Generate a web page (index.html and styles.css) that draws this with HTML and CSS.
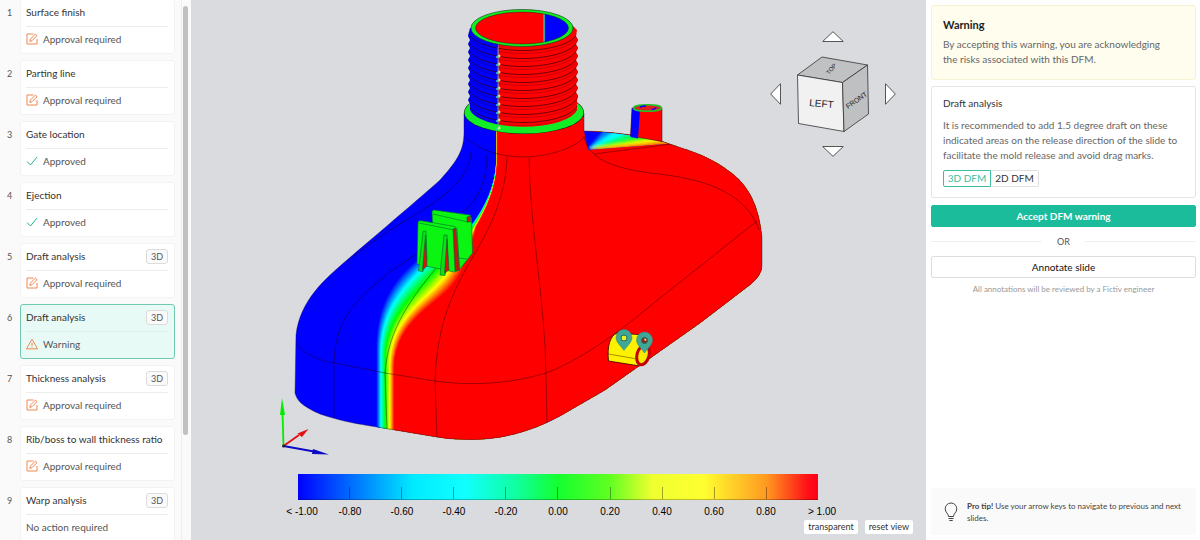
FILE: index.html
```html
<!DOCTYPE html>
<html lang="en">
<head>
    <meta charset="UTF-8">
    <meta name="viewport" content="width=device-width, initial-scale=1.0">
    <title>DFM review</title>
    <link rel="stylesheet" href="styles.css">
</head>
<body>

    <!-- icons shared by the slide list -->
    <svg class="sprite" aria-hidden="true">
        <symbol id="icon-edit" viewBox="0 0 12 12">
            <path d="M7.500 1H1v10h10V6"/>
            <path d="M3.800 8.400l.6-2.300L9.400 1.100l1.600 1.600L6 7.700z"/>
        </symbol>
        <symbol id="icon-check" viewBox="0 0 12 12">
            <path d="M1 6.500l3.500 3.500L11 2"/>
        </symbol>
        <symbol id="icon-warning" viewBox="0 0 12 12">
            <path d="M6 1.200L11.500 10.800H.5z M6 4.800v3 M6 8.700v.9"/>
        </symbol>
    </svg>

    <div class="app">
        <nav class="sidebar">
            <ol class="slides">
                <li class="slide">
                    <span class="number">1</span>
                    <div class="slide-card">
                        <div class="slide-title">Surface finish</div>
                        <div class="status"><svg class="icon orange"><use href="#icon-edit"/></svg>Approval required</div>
                    </div>
                </li>
                <li class="slide">
                    <span class="number">2</span>
                    <div class="slide-card">
                        <div class="slide-title">Parting line</div>
                        <div class="status"><svg class="icon orange"><use href="#icon-edit"/></svg>Approval required</div>
                    </div>
                </li>
                <li class="slide">
                    <span class="number">3</span>
                    <div class="slide-card">
                        <div class="slide-title">Gate location</div>
                        <div class="status"><svg class="icon green"><use href="#icon-check"/></svg>Approved</div>
                    </div>
                </li>
                <li class="slide">
                    <span class="number">4</span>
                    <div class="slide-card">
                        <div class="slide-title">Ejection</div>
                        <div class="status"><svg class="icon green"><use href="#icon-check"/></svg>Approved</div>
                    </div>
                </li>
                <li class="slide">
                    <span class="number">5</span>
                    <div class="slide-card">
                        <div class="slide-title">Draft analysis <span class="tag">3D</span></div>
                        <div class="status"><svg class="icon orange"><use href="#icon-edit"/></svg>Approval required</div>
                    </div>
                </li>
                <li class="slide">
                    <span class="number">6</span>
                    <div class="slide-card active">
                        <div class="slide-title">Draft analysis <span class="tag">3D</span></div>
                        <div class="status"><svg class="icon orange"><use href="#icon-warning"/></svg>Warning</div>
                    </div>
                </li>
                <li class="slide">
                    <span class="number">7</span>
                    <div class="slide-card">
                        <div class="slide-title">Thickness analysis <span class="tag">3D</span></div>
                        <div class="status"><svg class="icon orange"><use href="#icon-edit"/></svg>Approval required</div>
                    </div>
                </li>
                <li class="slide">
                    <span class="number">8</span>
                    <div class="slide-card">
                        <div class="slide-title">Rib/boss to wall thickness ratio</div>
                        <div class="status"><svg class="icon orange"><use href="#icon-edit"/></svg>Approval required</div>
                    </div>
                </li>
                <li class="slide">
                    <span class="number">9</span>
                    <div class="slide-card">
                        <div class="slide-title">Warp analysis <span class="tag">3D</span></div>
                        <div class="status">No action required</div>
                    </div>
                </li>
            </ol>
            <div class="scrollbar"><div class="thumb"></div></div>
        </nav>

        <main class="viewer">
            <svg class="model" viewBox="191 0 735 474" role="img" aria-label="Draft analysis model">
                <defs>
                    <clipPath id="body-clip">
                        <path id="body-shape" d="M464 113V132C464 150 458 160 440 180C420 198 375 236 347 260C325 279 300 300 296 335L295 393C297 401 303 405 308 408C316 413 325 416 333 418C350 423 365 425 377 427L437 437C455 440 475 440 490 438.500C515 436 540 427 560 416L605 390L700 323L751 284Q762 275 762 265V238C759 205 748 185 730 172C705 153 685 150 664 142C635 134 610 132 584 131V113Z"/>
                    </clipPath>
                    <clipPath id="thread-clip">
                        <path d="M470 28L468 36L470 40L468 44L470 48L468 52L470 56L468 60L470 64L468 68L470 72L468 76L470 80L468 84L470 88L468 92L470 96L468 100L470 104L470 110A54 19.500 0 0 0 577 110L577 100L578 96L576 92L578 88L576 84L578 80L576 76L578 72L576 68L578 64L576 60L578 56L576 52L578 48L576 44L578 40L576 36L577 30L573 26Z"/>
                    </clipPath>
                    <clipPath id="bore-clip"><ellipse cx="522" cy="28" rx="46.500" ry="16"/></clipPath>
                    <clipPath id="fan-clip"><path d="M584 131C610 131 640 136 672 143.500L588 150Z"/></clipPath>
                    <filter id="soften"><feGaussianBlur stdDeviation="1.600"/></filter>
                </defs>

                <g clip-path="url(#body-clip)">
                    <rect x="280" y="100" width="500" height="350" fill="#00f"/>
                    <g id="bands"></g>
                    <g clip-path="url(#fan-clip)">
                        <rect x="584" y="128" width="90" height="24" fill="#00f"/>
                        <g filter="url(#soften)">
                            <path d="M588 149L606 128L720 120V152Z" fill="#08f"/>
                            <path d="M588 149L616 130L720 120V152Z" fill="#0ff"/>
                            <path d="M588 149L632 132L720 125V152Z" fill="#0f6"/>
                            <path d="M588 149L642 136L720 128V152Z" fill="#3f0"/>
                            <path d="M588 149L652 139L720 132V152Z" fill="#ff0"/>
                            <path d="M588 149L664 141L720 134V152Z" fill="#f80"/>
                            <path d="M588 150.500L668 144L720 138V156Z" fill="#f00"/>
                        </g>
                    </g>
                </g>
                <use href="#body-shape" class="outline"/>

                <!-- surface edges -->
                <g class="edges" clip-path="url(#body-clip)">
                    <path d="M295 342C305 356 325 362 335 363L385 373L435 381C470 386 510 384 546 373C575 362 610 340 655 302L757 221"/>
                    <path d="M334 418V363C335 325 350 305 380 280C400 262 415 258 440 236"/>
                    <path d="M387 429L385 373C388 330 410 300 436 268"/>
                    <path d="M437 437L435 381C437 330 448 300 471 260C492 225 506 195 507 157"/>
                    <path d="M547 423L546 375C545 300 530 230 529 158"/>
                    <path d="M347 262C390 225 425 213 450 190C465 176 470 165 471 152"/>
                    <path d="M487 155C487 185 475 203 462 212"/>
                    <path d="M584 136C588 160 615 168 650 173C700 178 745 190 759 230"/>
                    <path d="M594 154L672 144"/>
                    <path d="M465 137C480 151 500 157 526 157C550 156 575 148 584 137"/>
                </g>

                <!-- small peg -->
                <path d="M632 108L630.500 136L662 141.500L662 108Z" fill="#f00" stroke="#400" stroke-width=".5"/>
                <path d="M632 108L630.500 137L638 138.500L640 110Z" fill="#00f"/>
                <ellipse cx="647.500" cy="108" rx="14" ry="3.200" fill="#e02020" stroke="#1ec32a" stroke-width="1.500"/>
                <path d="M640 107a9 2.500 0 0 1 6-1M652 109.500a9 2.500 0 0 0 4-2" fill="none" stroke="#00f" stroke-width="1.500"/>

                <!-- threaded neck -->
                <ellipse cx="524" cy="112.500" rx="60" ry="21.500" fill="#0f1e14"/>
                <ellipse cx="524" cy="112.500" rx="59.500" ry="21" fill="#12ee26"/>
                <g clip-path="url(#thread-clip)">
                    <rect x="460" y="20" width="38.500" height="112" fill="#00f"/>
                    <rect x="498.500" y="20" width="82" height="112" fill="#f00"/>
                    <g id="threads" class="threads"></g>
                </g>
                <g id="sparks"></g>
                <ellipse cx="522" cy="28" rx="51" ry="18.500" fill="#12ee26" stroke="#124a18" stroke-width=".7"/>
                <g clip-path="url(#bore-clip)">
                    <rect x="470" y="8" width="74" height="40" fill="#f00"/>
                    <rect x="544.500" y="8" width="30" height="40" fill="#00f"/>
                    <path d="M544 8V48" stroke="#5cc" stroke-width="1"/>
                </g>
                <ellipse cx="522" cy="28" rx="46.500" ry="16" class="edges"/>

                <!-- clip -->
                <g stroke="#063" stroke-width=".6">
                    <path d="M432 211L434 210L470 215L471.500 218L472.500 253L460 269L434 262Z" fill="#0af512"/>
                    <path d="M433 214L468 222M458 258L467 259" fill="none"/>
                    <path d="M467 217L470.500 216V222L467 222Z" fill="#d11"/>
                    <path d="M418 222L420 220.500L455 226.500L457 229L459.500 270L454 272L417 264Z" fill="#0af512"/>
                    <path d="M419 223L454 230" fill="none"/>
                    <path d="M453 229L456 228L459.500 270L455 271Z" fill="#c2180c"/>
                    <path d="M423 231.500L426 231L427 260L423 271.500L418.500 271Z" fill="#0ae014"/>
                    <path d="M425.500 235L427 266L422.500 270Z" fill="#d11"/>
                    <path d="M444 235L447 235L448 263L445 275.500L440 275Z" fill="#0ae014"/>
                    <path d="M447 239L449 270L444.500 273Z" fill="#d11"/>
                </g>

                <!-- side boss -->
                <path d="M617 333C610 336 607 346 608.500 361L640 366L645 335Z" fill="#fff200" stroke="#300" stroke-width=".8"/>
                <path d="M608.500 354L637 359" class="edges"/>
                <ellipse cx="643" cy="355" rx="6" ry="10" transform="rotate(15 643 355)" fill="#ffe600" stroke="#c30000" stroke-width="3"/>
                <path d="M640 355l5 -4-1 8-4 3z" fill="#f4f000"/>

                <!-- annotation pins -->
                <g fill="#3fa796" stroke="#2f8577" stroke-width=".5">
                    <path d="M624 350.500C620 345 616 342 616 337.500a8 8 0 0 1 16 0C632 342 628 345 624 350.500Z"/>
                    <path d="M644.500 353C640.500 347.500 636.500 344.500 636.500 340a8 8 0 0 1 16 0C652.500 344.500 648.500 347.500 644.500 353Z"/>
                </g>
                <circle cx="624" cy="338" r="3" fill="#e8f22a" stroke="#27675c"/>
                <circle cx="644.500" cy="340.500" r="3" fill="#8a2c12" stroke="#27675c"/>
                <path d="M644.500 338.500a2 2 0 0 1 2 2h-2z" fill="#ffe"/>

                <!-- axis triad -->
                <g stroke-width="1.800">
                    <path d="M283.500 446L282.500 412" stroke="#0e0"/>
                    <path d="M282 398L285 415H280Z" fill="#0e0"/>
                    <path d="M283.500 446L299 435" stroke="#e01010"/>
                    <path d="M308.500 429L302 437L297.500 433.500Z" fill="#e01010"/>
                    <path d="M283.500 446L314 451.500" stroke="#0a0ac8"/>
                    <path d="M329 454.500L312 454L313 449Z" fill="#0a0ac8"/>
                </g>
                <circle cx="283.500" cy="446" r="1.500" fill="#222"/>
            </svg>

            <div class="view-cube">
                <button class="arrow up" aria-label="Rotate up"><svg viewBox="0 0 22 11"><path d="M11 .7L21.300 10.500H.7z"/></svg></button>
                <button class="arrow left" aria-label="Rotate left"><svg viewBox="0 0 11 22"><path d="M.7 11L10.500 .7V21.300z"/></svg></button>
                <svg class="cube" viewBox="795 54 76 80">
                    <g stroke="#333" stroke-width=".8" stroke-linejoin="round">
                        <path d="M797.500 75L822 57L867.500 65L842.500 82.500Z" fill="#c0c1c2"/>
                        <path d="M797.500 75L842.500 82.500L844 131.500L798.500 123.500Z" fill="#f1f1f1"/>
                        <path d="M842.500 82.500L867.500 65L868.500 114L844 131.500Z" fill="#bfc0c1"/>
                    </g>
                    <text class="cube-text" transform="translate(809 106) rotate(5)">LEFT</text>
                    <text class="cube-text front" transform="translate(848 109) rotate(-35)">FRONT</text>
                    <text class="cube-text top" transform="translate(829 75) rotate(-50)">TOP</text>
                </svg>
                <button class="arrow right" aria-label="Rotate right"><svg viewBox="0 0 11 22"><path d="M10.300 11L.5 .7V21.300z"/></svg></button>
                <button class="arrow down" aria-label="Rotate down"><svg viewBox="0 0 22 11"><path d="M11 10.300L21.300 .5H.7z"/></svg></button>
            </div>

            <div class="legend">
                <div class="scale">
                    <i></i><i></i><i></i><i></i><i></i><i></i><i></i><i></i><i></i><i></i>
                </div>
            </div>
            <div class="scale-labels">
                <span class="end">&lt; -1.00</span><span>-0.80</span><span>-0.60</span><span>-0.40</span><span>-0.20</span><span>0.00</span><span>0.20</span><span>0.40</span><span>0.60</span><span>0.80</span><span class="end">&gt; 1.00</span>
            </div>
            <div class="view-actions">
                <button class="view-button">transparent</button>
                <button class="view-button">reset view</button>
            </div>
        </main>

        <aside class="panel">
            <section class="box warning">
                <h2>Warning</h2>
                <p>By accepting this warning, you are acknowledging the risks associated with this DFM.</p>
            </section>
            <section class="box">
                <h3>Draft analysis</h3>
                <p>It is recommended to add 1.5 degree draft on these indicated areas on the release direction of the slide to facilitate the mold release and avoid drag marks.</p>
                <div class="toggle">
                    <button class="selected">3D DFM</button><button>2D DFM</button>
                </div>
            </section>
            <button class="action accept">Accept DFM warning</button>
            <div class="or">OR</div>
            <button class="action">Annotate slide</button>
            <p class="note">All annotations will be reviewed by a Fictiv engineer</p>

            <div class="tip">
                <svg class="bulb" viewBox="0 0 14 20">
                    <path d="M4.500 14.500C4.500 11.500 1.200 10.500 1.200 6.800a5.800 5.800 0 0 1 11.600 0C12.800 10.500 9.500 11.500 9.500 14.500z M4.500 16.500h5 M5.300 18.500h3.400"/>
                </svg>
                <p><b>Pro tip!</b> Use your arrow keys to navigate to previous and next slides.</p>
            </div>
        </aside>
    </div>

    <script>
        const NS = "http://www.w3.org/2000/svg";

        function add(parent, name, attrs) {
            const el = document.createElementNS(NS, name);
            for (const key in attrs) el.setAttribute(key, attrs[key]);
            document.getElementById(parent).appendChild(el);
        }

        // Edges of the transition zone: -1 degree on one side, +1 on the other
        const low = [496,125, 496,162, 495,187, 484,207, 473,222, 455,240, 427,250, 410,265, 386,287, 376,312, 376,350, 376,445];
        const high = [497,125, 497,165, 496,188, 486,210, 476,227, 472,243, 467,264, 455,281, 438,305, 396,318, 394,368, 394,445];
        const steps = 32;

        for (let i = 0; i <= steps; i++) {
            const t = i / steps;
            const p = low.map((v, k) => (v + (high[k] - v) * t).toFixed(1));
            const d = `M${p[0]} ${p[1]}L${p[2]} ${p[3]}C${p.slice(4, 10).join(" ")}C${p.slice(10, 16).join(" ")}C${p.slice(16, 22).join(" ")}L${p[22]} ${p[23]}H780V100Z`;
            add("bands", "path", { d: d, fill: `hsl(${240 - 240 * t}, 100%, 50%)` });
        }

        // Thread turns on the neck
        for (let y = 31; y < 120; y += 8) {
            add("threads", "path", { d: `M468 ${y + 1}A55 20 0 0 0 578 ${y - 2}` });
            add("threads", "path", { class: "soft", d: `M468 ${y + 4}A55 20 0 0 0 578 ${y + 1}` });
            if (y < 108) {
                add("sparks", "circle", { cx: 499, cy: y + 25, r: 1.5, fill: "#e8e890" });
                add("sparks", "circle", { cx: 497, cy: y + 26, r: 1, fill: "#3cc" });
            }
        }
        add("sparks", "path", { d: "M498 47V128", stroke: "#7a9", "stroke-width": 0.8 });
    </script>

</body>
</html>
```

FILE: styles.css
```css
* {
    box-sizing: border-box;
}
body {
    margin: 0;
    font-family: Lato, "Liberation Sans", sans-serif;
    font-size: 10px;
    color: #555;
    background: white;
}
button {
    font: inherit;
    color: inherit;
    padding: 0;
    cursor: pointer;
}
h2, h3, p {
    margin: 0;
}
.sprite {
    display: none;
}
.app {
    display: grid;
    grid-template-columns: 191px 1fr 274px;
    height: 100vh;
    overflow: hidden;
}

/* slide list */
.sidebar {
    display: flex;
    min-height: 0;
    background: #fafafa;
}
.slides {
    flex: 1;
    list-style: none;
    margin: -1px 0 0;
    padding: 0 6px 0 0;
    overflow: hidden;
}
.slide {
    display: flex;
    margin-bottom: 6px;
}
.number {
    width: 20px;
    padding: 6px 0 0 7px;
    font-size: 9px;
    line-height: 15px;
}
.slide-card {
    flex: 1;
    height: 55px;
    padding: 0 6px 0 5px;
    background: white;
    border: 1px solid #f3f3f3;
    border-radius: 3px;
}
.slide-card.active {
    background: #e8faf5;
    border-color: #72c9b2;
}
.slide-title {
    display: flex;
    justify-content: space-between;
    align-items: center;
    height: 27px;
    padding-bottom: 2px;
    color: #333;
    border-bottom: 1px solid #ececec;
    white-space: nowrap;
}
.active .slide-title {
    border-color: #d9efe8;
}
.tag {
    padding: 0 4px;
    font-size: 9px;
    line-height: 13px;
    color: #555;
    background: #fafafa;
    border: 1px solid #dcdcdc;
    border-radius: 3px;
}
.status {
    display: flex;
    align-items: center;
    gap: 5px;
    height: 24px;
    color: #555;
}
.icon {
    width: 12px;
    height: 12px;
    fill: none;
    stroke-width: 1;
}
.icon.orange {
    stroke: #f08850;
}
.icon.green {
    stroke: #27b08b;
}
.scrollbar {
    width: 10px;
    padding: 6px 3px 0 1px;
    background: #fafafa;
    border-left: 1px solid #eee;
}
.thumb {
    height: 429px;
    background: #c1c1c1;
    border-radius: 3px;
}

/* 3D viewer */
.viewer {
    position: relative;
    display: flex;
    flex-direction: column;
    min-width: 0;
    min-height: 0;
    background: #dadbdf;
}
.model {
    flex: 1;
    width: 100%;
    min-height: 0;
}
.outline {
    fill: none;
    stroke: #201040;
    stroke-width: .4;
}
.edges {
    fill: none;
    stroke: #200;
    stroke-width: .6;
    stroke-opacity: .7;
}
.threads {
    fill: none;
    stroke: #300010;
    stroke-width: 1;
    stroke-opacity: .7;
}
.threads .soft {
    stroke-opacity: .25;
}
.view-cube {
    position: absolute;
    top: 31px;
    right: 30px;
    width: 126px;
    height: 126px;
    display: grid;
    grid-template-columns: 11px 1fr 11px;
    grid-template-rows: 11px 1fr 11px;
    align-items: center;
    justify-items: center;
}
.arrow {
    display: flex;
    background: none;
    border: none;
}
.arrow path {
    fill: white;
    stroke: #444;
    stroke-width: .9;
}
.up, .down {
    grid-column: 2;
    width: 22px;
    height: 11px;
}
.left, .right {
    width: 11px;
    height: 22px;
}
.left {
    grid-area: 2 / 1;
}
.right {
    grid-area: 2 / 3;
}
.arrow svg {
    width: 100%;
    height: 100%;
}
.cube {
    grid-area: 2 / 2;
    width: 76px;
    height: 80px;
}
.cube-text {
    font-family: "Liberation Sans", Arial, sans-serif;
    font-size: 10px;
    fill: #222;
}
.cube-text.front {
    font-size: 7px;
}
.cube-text.top {
    font-size: 6px;
}
.legend {
    padding: 0 108px 0 107px;
}
.scale {
    display: flex;
    align-items: flex-end;
    height: 26px;
    background: linear-gradient(to right, #0000ff, #0080ff 12%, #00eaff 22%, #10ffff 32%, #10ffa0 42%, #14ff30 50%, #60ff20 60%, #eeff30 68%, #ffff30 78%, #ff9a20 90%, #ff1018 98%, #ff0018);
    border-bottom: 1px solid rgba(0, 0, 0, .25);
}
.scale i {
    flex: 1;
    height: 12px;
    border-right: 1px solid rgba(0, 0, 0, .35);
}
.scale i:last-child {
    border: none;
}
.scale-labels {
    display: grid;
    grid-template-columns: repeat(11, 1fr);
    padding: 6px 82px 0 81px;
    font-family: "Liberation Sans", Arial, sans-serif;
    font-size: 10px;
    line-height: 12px;
    color: #000;
    text-align: center;
    white-space: nowrap;
}
.scale-labels .end {
    padding-left: 8px;
}
.view-actions {
    display: flex;
    justify-content: flex-end;
    gap: 7px;
    padding: 2px 13px 6px 0;
}
.view-button {
    height: 14px;
    padding: 0 4px;
    font-size: 9px;
    line-height: 14px;
    color: #333;
    background: white;
    border: none;
    border-radius: 2px;
}

/* review panel */
.panel {
    display: flex;
    flex-direction: column;
    padding: 5px 4px 5px 5px;
}
.box {
    padding: 9px 11px 10px;
    margin-bottom: 7px;
    line-height: 15px;
    color: #666;
    border: 1px solid #e4e4e6;
    border-radius: 3px;
}
.box.warning {
    padding: 10px 24px 12px 11px;
    margin-bottom: 6px;
    background: #fefdee;
    border-color: #f8f2d4;
}
.box h2 {
    margin-bottom: 4px;
    font-size: 11px;
    line-height: 17px;
    color: #222;
}
.box h3 {
    margin-bottom: 7px;
    font-size: 10px;
    font-weight: normal;
    color: #333;
}
.toggle {
    display: flex;
    margin-top: 7px;
}
.toggle button {
    width: 48px;
    height: 17px;
    line-height: 15px;
    color: #333;
    background: white;
    border: 1px solid #e0e0e0;
    border-left: none;
    border-radius: 0 2px 2px 0;
}
.toggle .selected {
    color: #3dbf9f;
    border: 1px solid #3dbf9f;
    border-radius: 2px 0 0 2px;
}
.action {
    height: 22px;
    flex-shrink: 0;
    color: #111;
    background: white;
    border: 1px solid #dedede;
    border-radius: 2px;
}
.action.accept {
    color: white;
    font-weight: bold;
    background: #1bbc9b;
    border-color: #1bbc9b;
}
.or {
    display: flex;
    align-items: center;
    gap: 15px;
    height: 29px;
    font-size: 9px;
}
.or::before, .or::after {
    content: "";
    flex: 1;
    border-top: 1px solid #f0f0f0;
}
.note {
    margin-top: 5px;
    font-size: 8px;
    line-height: 12px;
    color: #999;
    text-align: center;
}
.tip {
    display: flex;
    align-items: center;
    gap: 9px;
    height: 47px;
    margin-top: auto;
    padding: 0 12px 0 13px;
    font-size: 8px;
    line-height: 12px;
    color: #444;
    background: #fafafa;
}
.bulb {
    flex-shrink: 0;
    width: 14px;
    height: 20px;
    fill: none;
    stroke: #444;
    stroke-width: 1;
}
```
